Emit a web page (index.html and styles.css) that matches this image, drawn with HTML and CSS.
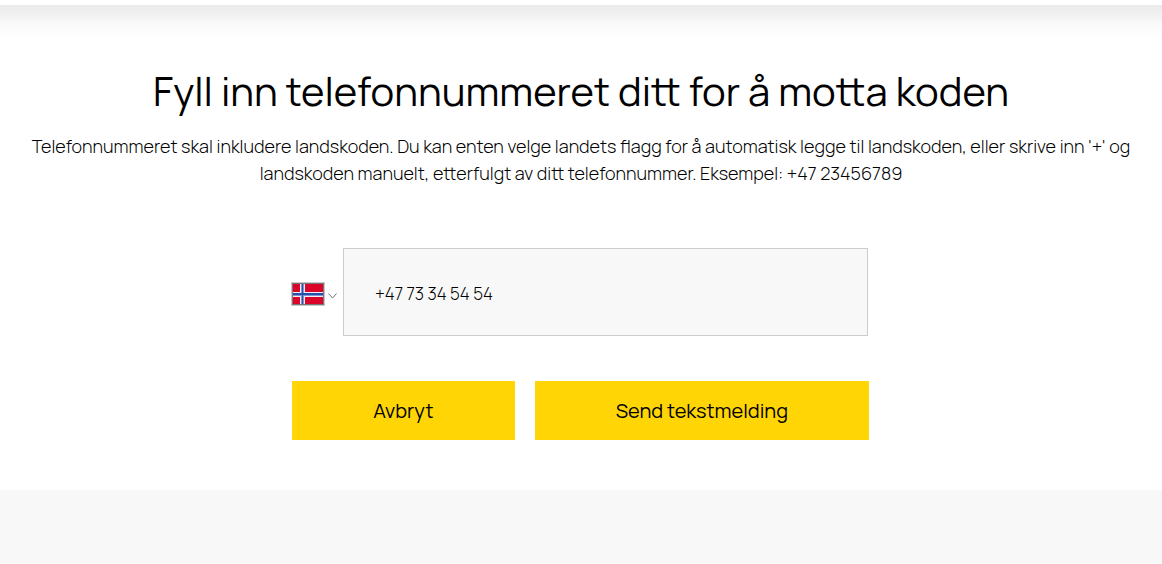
FILE: index.html
```html
<!DOCTYPE html>
<html lang="nb">
<head>
    <meta charset="UTF-8">
    <meta name="viewport" content="width=device-width, initial-scale=1.0">
    <title>Telefonnummer</title>
    <link rel="stylesheet" href="styles.css">
</head>
<body>

    <header class="top-bar"></header>

    <main class="content">
        <h1>Fyll inn telefonnummeret ditt for å motta koden</h1>
        <p class="intro">Telefonnummeret skal inkludere landskoden. Du kan enten velge landets flagg for å automatisk legge til landskoden, eller skrive inn '+' og landskoden manuelt, etterfulgt av ditt telefonnummer. Eksempel: +47 23456789</p>

        <form class="phone-form">
            <div class="phone-row">
                <div class="country">
                    <svg class="flag" viewBox="0 0 34 24" aria-hidden="true">
                        <rect width="34" height="24" fill="#c8c8c8"/>
                        <rect x="1" y="1" width="32" height="22" fill="#777"/>
                        <rect x="2" y="2" width="30" height="20" fill="#dc0529"/>
                        <path d="M9 2h5v20H9zM2 10h30v5H2z" fill="#f2eef5"/>
                        <path d="M10 2h3v20h-3zM2 11h30v3H2z" fill="#8295d0"/>
                        <path d="M11 2h1v20h-1zM2 11h30v2H2z" fill="#2450ae"/>
                    </svg>
                    <svg class="chevron" viewBox="0 0 9 6" aria-hidden="true">
                        <path d="M.5 .5l4 4.500 4-4.500" fill="none" stroke="#777"/>
                    </svg>
                    <select class="country-select" aria-label="Velg land">
                        <option value="47" selected>Norge</option>
                        <option value="46">Sverige</option>
                        <option value="45">Danmark</option>
                    </select>
                </div>
                <input class="phone-input" type="tel" value="+47 73 34 54 54" aria-label="Telefonnummer">
            </div>
            <div class="buttons">
                <button class="btn" type="button">Avbryt</button>
                <button class="btn btn-send" type="submit">Send tekstmelding</button>
            </div>
        </form>
    </main>

</body>
</html>
```

FILE: styles.css
```css
:root {
    --yellow: #ffd505;
    --grey-bg: #f8f8f8;
    --border: #ccc;
}

* {
    box-sizing: border-box;
}

body {
    margin: 0;
    background: var(--grey-bg);
    color: #000;
    font-family: Manrope, Inter, sans-serif;
    font-weight: 400;
}

.top-bar {
    height: 5px;
    background: #fff;
}

/* Skygge under toppfeltet */
.content {
    padding: 59px 24px 50px;
    background: #fff linear-gradient(#eaeaea, #f0f0f0 8px, #fafafa 20px, #fff 34px);
    text-align: center;
}

h1 {
    margin: 0 0 15px;
    font-size: 40px;
    font-weight: 400;
    line-height: 54px;
}

.intro {
    margin: 0;
    font-size: 18px;
    font-weight: 300;
    line-height: 27px;
}

.phone-form {
    max-width: 578px;
    margin: 61px auto 0;
    padding-right: 1px;
}

.phone-row {
    display: flex;
    align-items: center;
    padding-right: 1px;
}

.country {
    position: relative;
    display: flex;
    align-items: center;
    gap: 3px;
    padding: 4px 6px 0 0;
    margin-left: -1px;
}

.flag {
    width: 34px;
    height: 24px;
}

.chevron {
    width: 9px;
    height: 6px;
    margin-top: 4px;
}

/* Usynlig nedtrekksliste over flagget */
.country-select {
    position: absolute;
    inset: 0;
    width: 100%;
    opacity: 0;
    cursor: pointer;
}

.phone-input {
    flex: 1;
    min-width: 0;
    height: 88px;
    padding: 2px 31px 0;
    border: 1px solid var(--border);
    border-radius: 0;
    background: var(--grey-bg);
    color: #000;
    font: inherit;
    font-size: 17px;
    font-weight: 300;
}

.buttons {
    display: flex;
    gap: 20px;
    margin-top: 45px;
}

.btn {
    flex: 2;
    height: 59px;
    padding: 0;
    border: 0;
    background: var(--yellow);
    color: #000;
    font: inherit;
    font-size: 20px;
    cursor: pointer;
}

.btn-send {
    flex: 3;
}
```
